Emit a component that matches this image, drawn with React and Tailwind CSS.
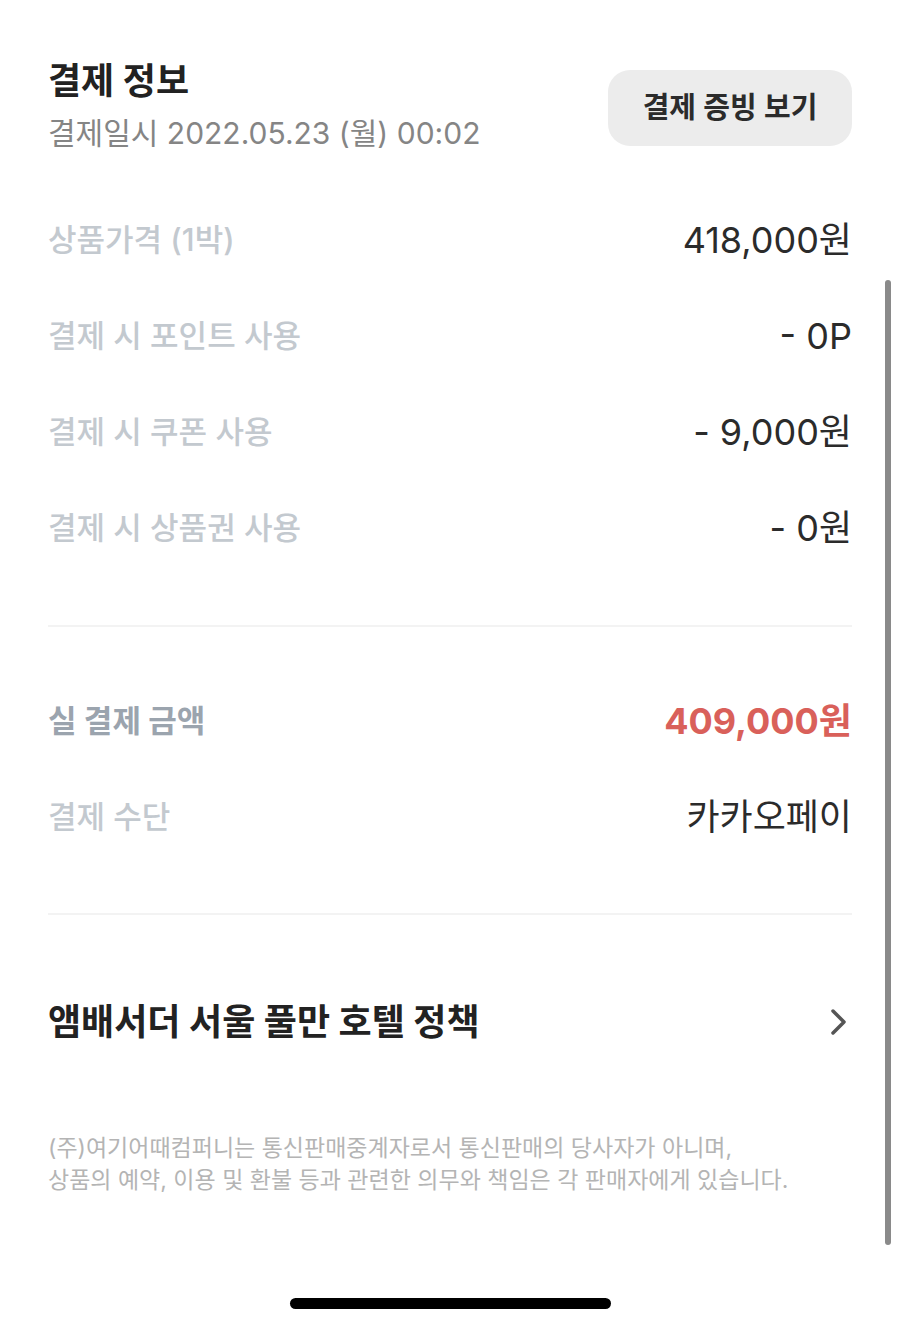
import React from 'react';

const font = { fontFamily: 'Inter, "Noto Sans CJK KR", sans-serif' };

const priceRows = [
  { label: '상품가격 (1박)', value: '418,000원' },
  { label: '결제 시 포인트 사용', value: '- 0P' },
  { label: '결제 시 쿠폰 사용', value: '- 9,000원' },
  { label: '결제 시 상품권 사용', value: '- 0원' },
];

const Row = ({ label, value, strong }) => (
  <div className="flex h-[96px] items-center justify-between">
    <span className={strong ? 'text-[31px] font-bold text-[#9ba4ae]' : 'text-[31px] font-medium text-[#c3c9cf]'}>{label}</span>
    <span className={strong ? 'text-[36px] font-bold text-[#d9605a]' : 'text-[36px] text-[#2b2b2b]'}>{value}</span>
  </div>
);

export default function App() {
  return (
    <div className="relative min-h-[1329px] w-full overflow-hidden bg-white" style={font}>
      <div className="px-[48px] pt-[59px]">
        {/* header */}
        <div className="flex justify-between">
          <div>
            <h1 className="h-[44px] text-[36px] font-bold leading-[44px] text-[#222]">결제 정보</h1>
            <p className="mt-[10px] h-[40px] text-[30px] leading-[40px] text-[#858585]">결제일시 2022.05.23 (월) 00:02</p>
          </div>
          <button className="mt-[11px] flex h-[76px] w-[244px] items-center justify-center rounded-[22px] bg-[#ececec] text-[29px] font-semibold text-[#2b2b2b]">
            결제 증빙 보기
          </button>
        </div>

        {/* price breakdown */}
        <div className="mt-[39px]">
          {priceRows.map((r) => (
            <Row key={r.label} {...r} />
          ))}
        </div>

        <div className="mt-[49px] h-[2px] bg-[#f3f3f3]" />

        <div className="mt-[46px]">
          <Row label="실 결제 금액" value="409,000원" strong />
          <Row label="결제 수단" value="카카오페이" />
        </div>

        <div className="mt-[48px] h-[2px] bg-[#f3f3f3]" />

        {/* policy */}
        <div className="mt-[59px] flex h-[96px] items-center justify-between">
          <span className="text-[36px] font-bold text-[#222]">앰배서더 서울 풀만 호텔 정책</span>
          <svg width="22" height="30" viewBox="0 0 22 30" className="mr-[2px]">
            <polyline points="5,4 16,15 5,26" fill="none" stroke="#555" strokeWidth="3.5" strokeLinecap="round" strokeLinejoin="round" />
          </svg>
        </div>

        <p className="mt-[62px] text-[23px] leading-[32px] text-[#b4b4b4]">
          (주)여기어때컴퍼니는 통신판매중계자로서 통신판매의 당사자가 아니며,
          <br />
          상품의 예약, 이용 및 환불 등과 관련한 의무와 책임은 각 판매자에게 있습니다.
        </p>
      </div>

      {/* scrollbar */}
      <div className="absolute left-[885px] top-[280px] h-[965px] w-[6px] rounded-full bg-[#8a8a8a]" />
      {/* home indicator */}
      <div className="absolute left-[290px] top-[1298px] h-[11px] w-[321px] rounded-full bg-black" />
    </div>
  );
}
